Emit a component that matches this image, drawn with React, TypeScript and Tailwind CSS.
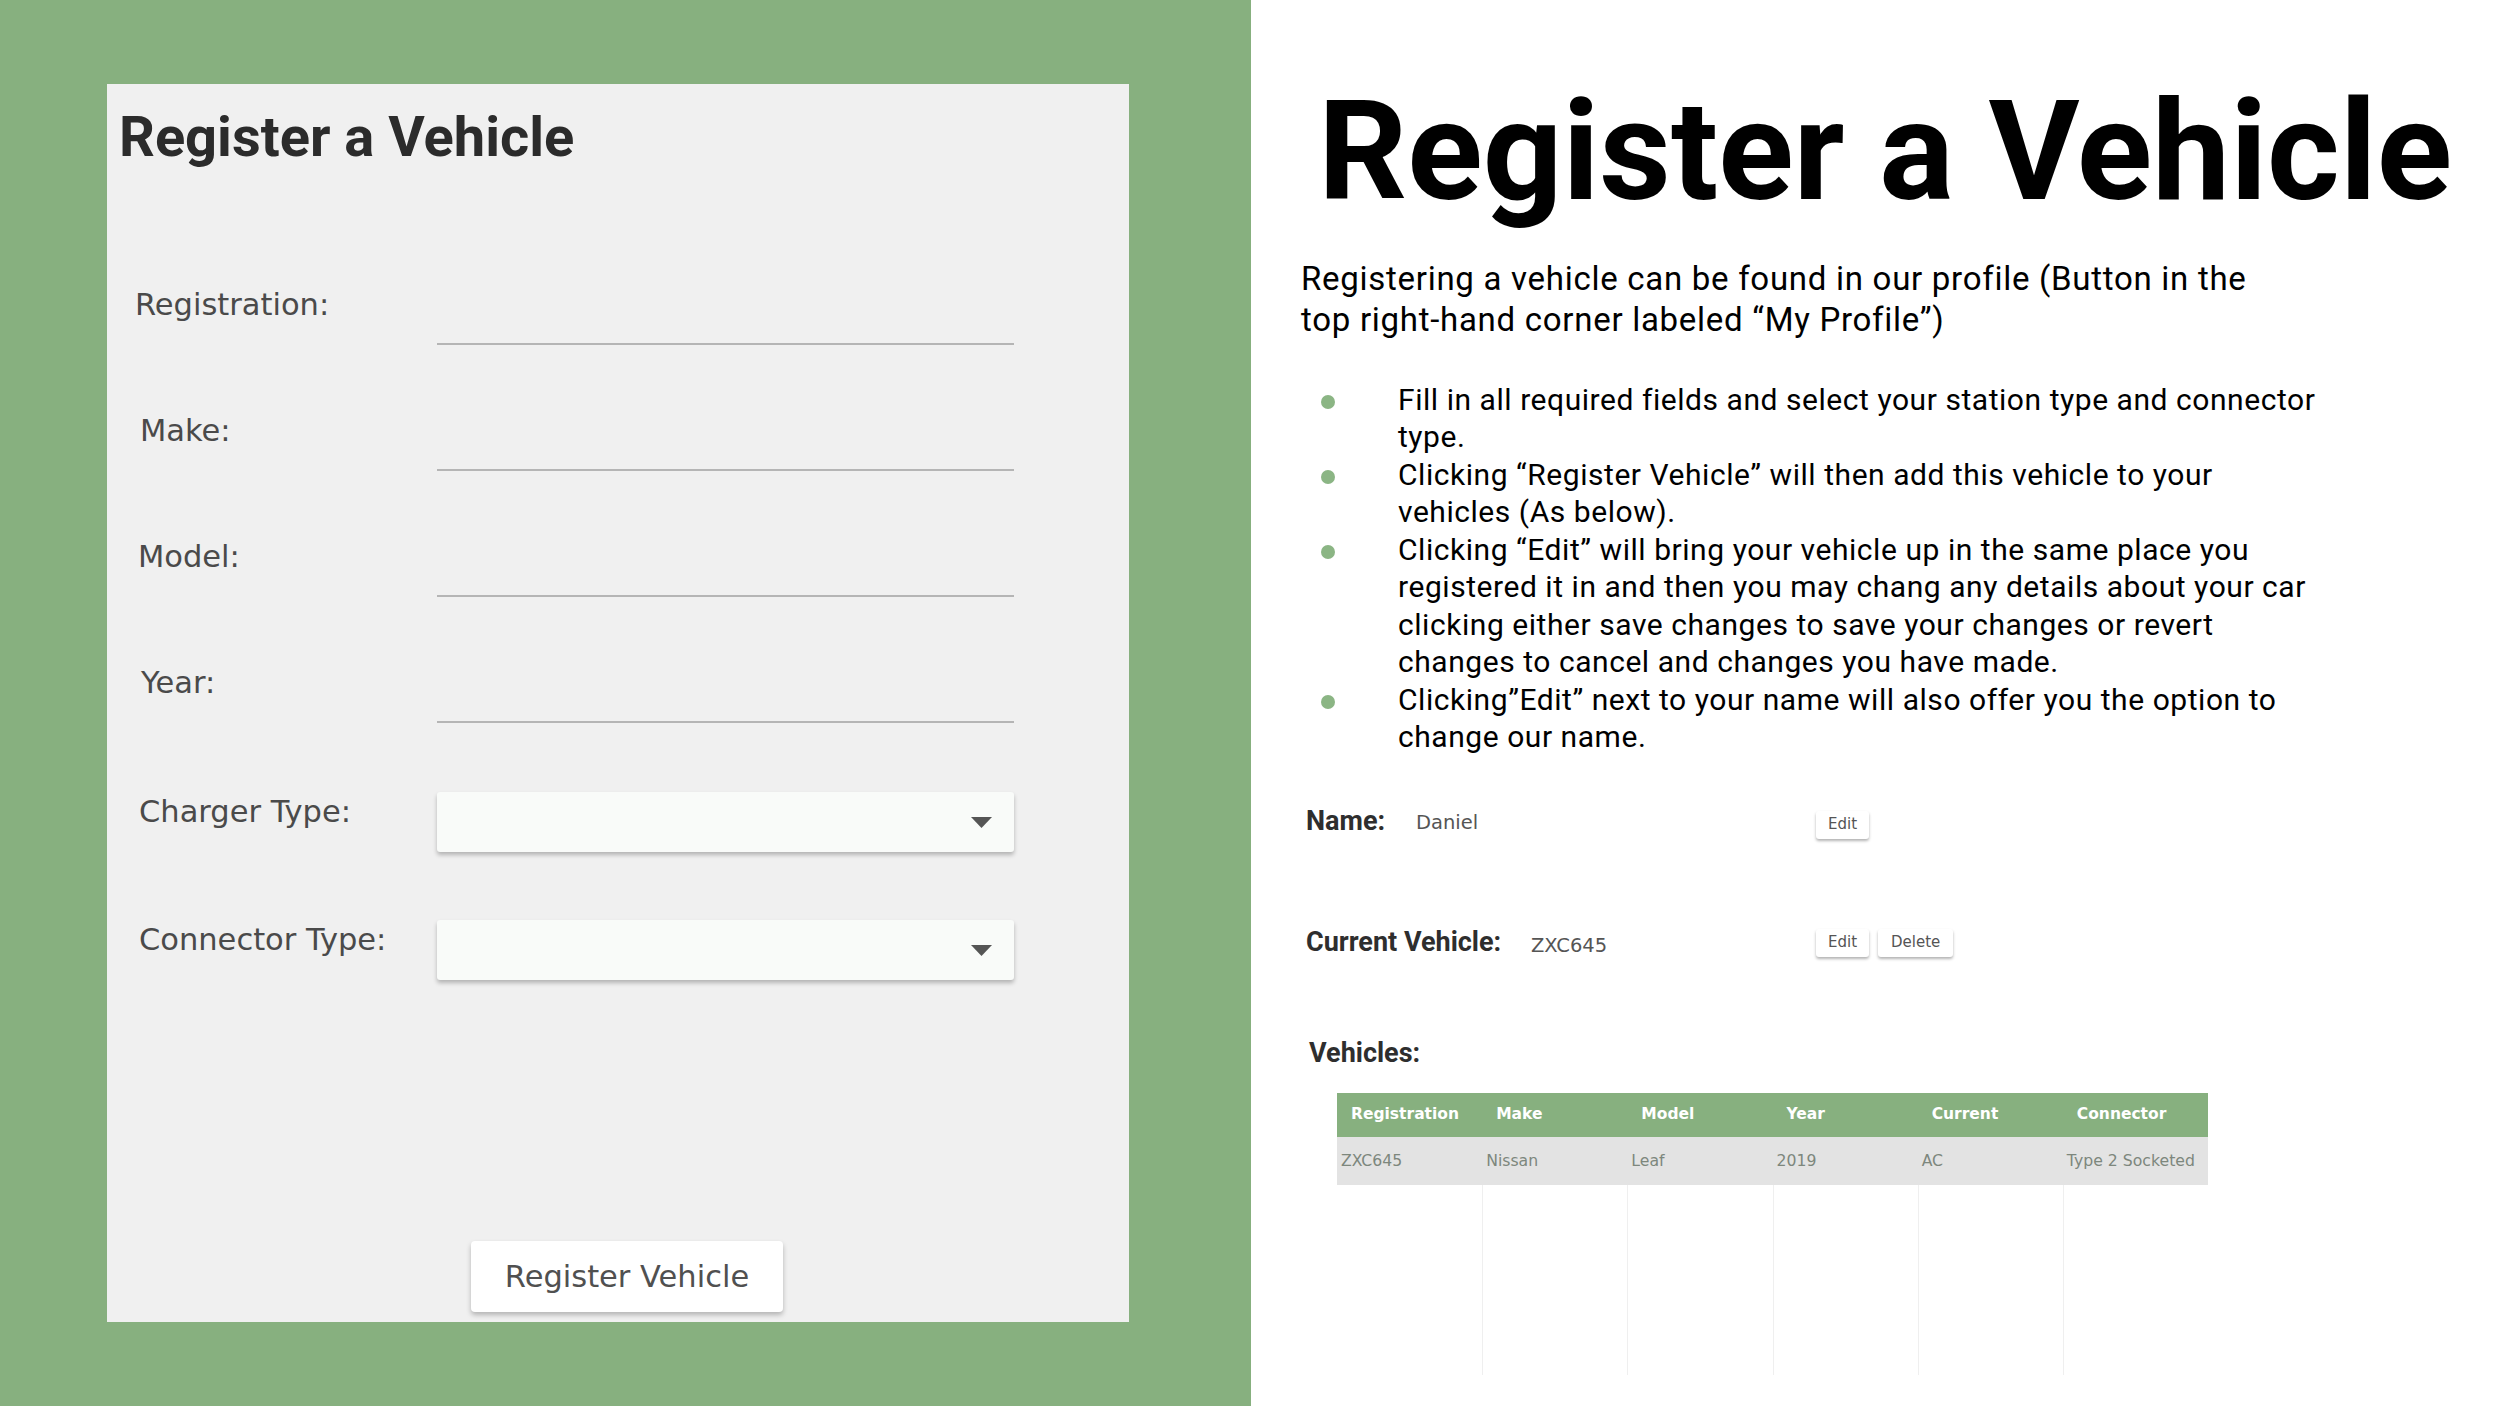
import React from "react";

const dv = "font-['DejaVu_Sans',sans-serif]";
const rb = "font-['Roboto',sans-serif]";

function Field({ label, pl }: { label: string; pl: string }) {
  return (
    <div className="flex h-[126px] items-start">
      <div className={`w-[330px] ${pl} ${dv} text-[30.5px] leading-none text-[#4a4a4a] whitespace-nowrap`}>{label}</div>
      <div className="w-[577px] h-[55px] border-b-2 border-[#b5b5b5]" />
    </div>
  );
}

function SelectField({ label, h }: { label: string; h: string }) {
  return (
    <div className={`flex ${h} items-start`}>
      <div className={`w-[330px] pl-[32px] pt-[5px] ${dv} text-[30.5px] leading-none text-[#4a4a4a] whitespace-nowrap`}>{label}</div>
      <div className="w-[577px] h-[60px] bg-[#f9fbf9] rounded-[3px] shadow-[0_3px_4px_rgba(0,0,0,0.25)] flex items-center justify-end pr-[22px]">
        <svg width="21" height="11" viewBox="0 0 21 11">
          <polygon points="0,0 21,0 10.5,11" fill="#555555" />
        </svg>
      </div>
    </div>
  );
}

function SmallBtn({ children, cls = "" }: { children: React.ReactNode; cls?: string }) {
  return (
    <div className={`h-[28px] px-[12px] bg-white rounded-[3px] shadow-[0_2px_3px_rgba(0,0,0,0.3)] flex items-center ${dv} text-[15px] text-[#555] ${cls}`}>
      {children}
    </div>
  );
}

const bullets: string[][] = [
  ["Fill in all required fields and select your station type and connector", "type."],
  ["Clicking \u201cRegister Vehicle\u201d will then add this vehicle to your", "vehicles (As below)."],
  [
    "Clicking \u201cEdit\u201d will bring your vehicle up in the same place you",
    "registered it in and then you may chang any details about your car",
    "clicking either save changes to save your changes or revert",
    "changes to cancel and changes you have made.",
  ],
  ["Clicking\u201dEdit\u201d next to your name will also offer you the option to", "change our name."],
];

const headers = ["Registration", "Make", "Model", "Year", "Current", "Connector"];
const row = ["ZXC645", "Nissan", "Leaf", "2019", "AC", "Type 2 Socketed"];

export default function App() {
  return (
    <div className="flex w-[2500px] h-[1406px] overflow-hidden bg-white">
      {/* Left green panel */}
      <div className="w-[1251px] h-full shrink-0 bg-[#87b07f] pl-[107px] pt-[84px]">
        <div className="w-[1022px] h-[1238px] bg-[#f0f0f0] flex flex-col">
          <div className={`ml-[12px] mt-[25px] ${rb} font-bold text-[56px] leading-none text-[#2b2b2b] whitespace-nowrap`}>
            Register a Vehicle
          </div>
          <div className="mt-[125px]">
            <Field label="Registration:" pl="pl-[28px]" />
            <Field label="Make:" pl="pl-[33px]" />
            <Field label="Model:" pl="pl-[31px]" />
            <div className="flex h-[124px] items-start">
              <div className={`w-[330px] pl-[34px] ${dv} text-[30.5px] leading-none text-[#4a4a4a]`}>Year:</div>
              <div className="w-[577px] h-[55px] border-b-2 border-[#b5b5b5]" />
            </div>
            <SelectField label="Charger Type:" h="h-[128px]" />
            <SelectField label="Connector Type:" h="h-[128px]" />
          </div>
          <div className={`mt-[193px] ml-[364px] w-[312px] h-[71px] bg-white rounded-[4px] shadow-[0_3px_5px_rgba(0,0,0,0.25)] flex items-center justify-center ${dv} text-[30.5px] text-[#505050]`}>
            Register Vehicle
          </div>
        </div>
      </div>

      {/* Right white panel */}
      <div className="flex-1 h-full bg-white flex flex-col">
        <div className={`ml-[67px] mt-[82px] ${rb} font-bold text-[139.5px] leading-none text-black whitespace-nowrap`}>
          Register a Vehicle
        </div>
        <div className={`ml-[50px] mt-[36px] ${rb} text-[33px] leading-[41px] tracking-[0.72px] text-black whitespace-nowrap`}>
          <div>Registering a vehicle can be found in our profile (Button in the</div>
          <div>top right-hand corner labeled {"\u201cMy Profile\u201d)"}</div>
        </div>
        <div className="mt-[41px]">
          {bullets.map((lines, i) => (
            <div key={i} className="flex">
              <div className="w-[147px] shrink-0">
                <div className="ml-[70px] mt-[14px] w-[14px] h-[14px] rounded-full bg-[#8bb584]" />
              </div>
              <div className={`${rb} text-[30px] leading-[37.5px] tracking-[0.55px] text-black whitespace-nowrap`}>
                {lines.map((l, j) => (
                  <div key={j}>{l}</div>
                ))}
              </div>
            </div>
          ))}
        </div>

        {/* Name row */}
        <div className="mt-[52px] h-[121px] flex items-start">
          <div className={`ml-[55px] w-[110px] ${rb} font-bold text-[27px] leading-none text-[#2e2e2e]`}>Name:</div>
          <div className={`w-[400px] mt-[5.5px] ${dv} text-[19.5px] leading-none text-[#555]`}>Daniel</div>
          <SmallBtn cls="mt-[3px] h-[27px]">Edit</SmallBtn>
        </div>

        {/* Current vehicle row */}
        <div className="h-[111px] flex items-start">
          <div className={`ml-[55px] w-[225px] ${rb} font-bold text-[27px] leading-none text-[#2e2e2e] whitespace-nowrap`}>
            Current Vehicle:
          </div>
          <div className={`w-[285px] mt-[7.5px] ${dv} text-[19.5px] leading-none text-[#555]`}>ZXC645</div>
          <SmallBtn>Edit</SmallBtn>
          <SmallBtn cls="ml-[9px] px-[13px]">Delete</SmallBtn>
        </div>

        <div className={`ml-[58px] ${rb} font-bold text-[27px] leading-none text-[#2e2e2e]`}>Vehicles:</div>

        {/* Table */}
        <div className="mt-[26px] ml-[86px] w-[871px]">
          <div className="grid grid-cols-6 h-[44px] bg-[#87b07f]">
            {headers.map((h) => (
              <div key={h} className={`pl-[14px] pt-[1px] flex items-center ${dv} font-bold text-[15.5px] text-white whitespace-nowrap`}>
                {h}
              </div>
            ))}
          </div>
          <div className="grid grid-cols-6 h-[48px] bg-[#e3e3e3]">
            {row.map((c) => (
              <div key={c} className={`pl-[4px] flex items-center ${dv} text-[15.7px] text-[#7d877d] whitespace-nowrap`}>
                {c}
              </div>
            ))}
          </div>
          <div className="grid grid-cols-6 h-[190px]">
            {row.map((c, i) => (
              <div key={c} className={i === 0 ? "" : "border-l border-[#efefef]"} />
            ))}
          </div>
        </div>
      </div>
    </div>
  );
}
